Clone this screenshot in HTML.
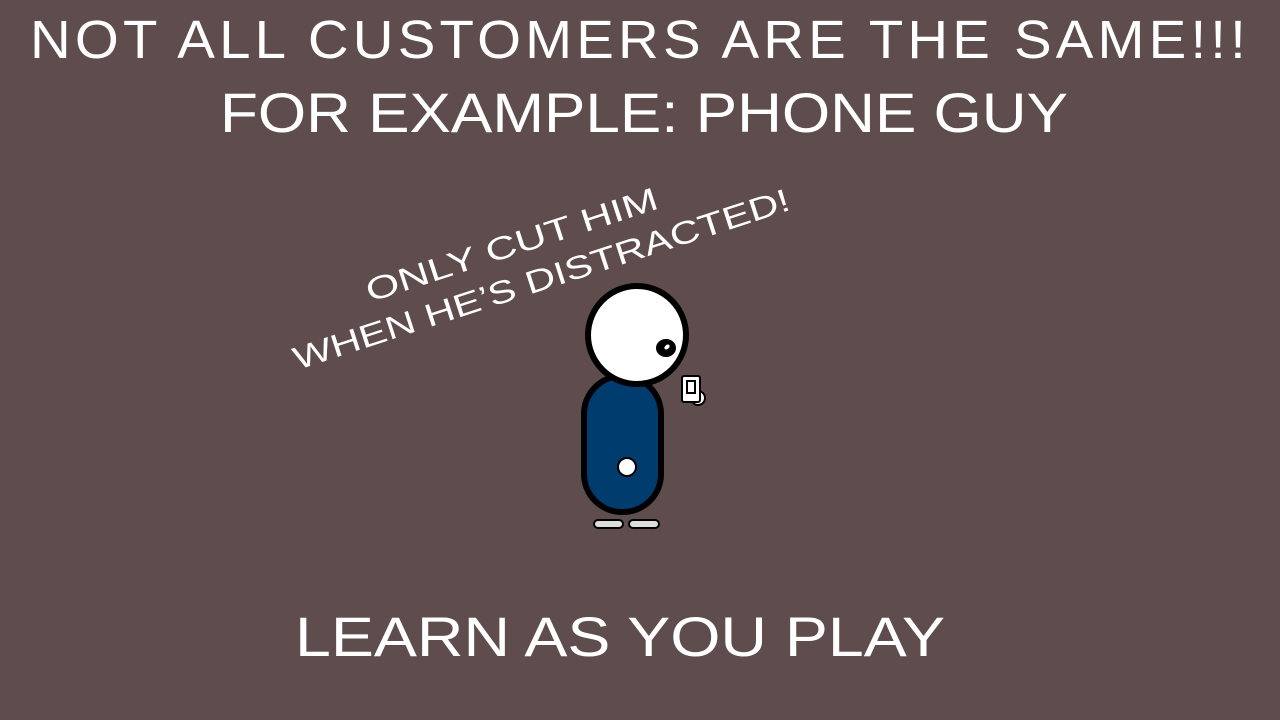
<!DOCTYPE html>
<html><head><style>
html,body{margin:0;padding:0;background:#5f4d4d;}
svg{display:block}
text{font-family:"Liberation Sans",sans-serif;fill:#fff;}
</style></head><body>
<svg width="1280" height="720" viewBox="0 0 1280 720">
<rect width="1280" height="720" fill="#5f4d4d"/>
<text x="30" y="58" font-size="54" textLength="1220" lengthAdjust="spacingAndGlyphs" letter-spacing="4">NOT ALL CUSTOMERS ARE THE SAME!!!</text>
<text x="220" y="132" font-size="56" textLength="848" lengthAdjust="spacingAndGlyphs">FOR EXAMPLE: PHONE GUY</text>
<text x="295" y="656" font-size="56" textLength="650" lengthAdjust="spacingAndGlyphs">LEARN AS YOU PLAY</text>
<g transform="translate(-8 -18) rotate(-18 540 275)">
<text x="372" y="268" font-size="32" textLength="305" lengthAdjust="spacingAndGlyphs">ONLY CUT HIM</text>
<text x="282" y="310" font-size="32" textLength="520" lengthAdjust="spacingAndGlyphs">WHEN HE’S DISTRACTED!</text>
</g>
<rect x="584" y="376" width="77" height="136" rx="38" fill="#003c6e" stroke="#000" stroke-width="6"/>
<circle cx="627" cy="467" r="9" fill="#fff" stroke="#000" stroke-width="2"/>
<circle cx="637" cy="335" r="49" fill="#fff" stroke="#000" stroke-width="6"/>
<ellipse cx="666" cy="348" rx="10" ry="9" fill="#000"/>
<ellipse cx="667" cy="347" rx="3" ry="2" fill="#fff" transform="rotate(-40 667 347)"/>
<rect x="594" y="520" width="29" height="8" rx="4" fill="#ddd" stroke="#000" stroke-width="2"/>
<rect x="629" y="520" width="30" height="8" rx="4" fill="#ddd" stroke="#000" stroke-width="2"/>
<circle cx="698" cy="398" r="7" fill="#fff" stroke="#000" stroke-width="2"/>
<rect x="682" y="376" width="18" height="26" rx="2" fill="#fff" stroke="#000" stroke-width="2"/>
<rect x="687" y="381" width="8" height="12" fill="#fff" stroke="#000" stroke-width="2"/>
</svg>
</body></html>
